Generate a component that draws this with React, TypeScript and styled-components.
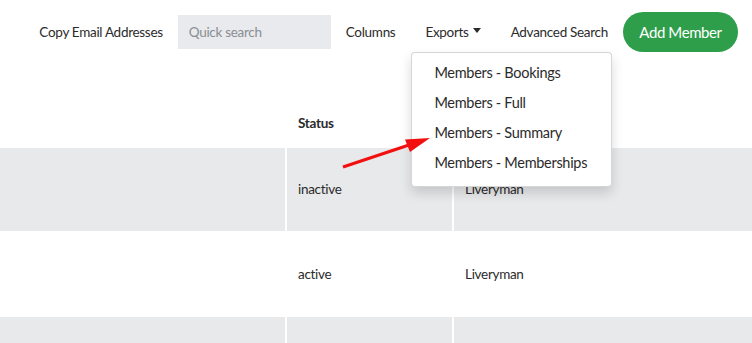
import React from "react";
import styled, { createGlobalStyle } from "styled-components";

const Global = createGlobalStyle`
  html, body { margin: 0; padding: 0; background: #fff; }
  body { font-family: Lato, "Open Sans", sans-serif; color: #2b2b2b; overflow: hidden; }
  * { box-sizing: border-box; }
`;

const Page = styled.div`
  position: relative;
  width: 752px;
  height: 343px;
  overflow: hidden;
`;

const Toolbar = styled.div`
  display: flex;
  align-items: center;
  justify-content: flex-end;
  height: 63px;
  padding: 0 14px 0 0;
`;

const Link = styled.div`
  position: relative;
  display: flex;
  align-items: center;
  height: 40px;
  padding: 0 15px;
  font-size: 13.5px;
  letter-spacing: -0.3px;
  color: #2b2b2b;
  white-space: nowrap;
`;

const Search = styled.div`
  display: flex;
  align-items: center;
  width: 153px;
  height: 34px;
  padding: 0 11px;
  background: #e8eaed;
  color: #8a8d92;
  font-size: 13.5px;
  letter-spacing: -0.3px;
`;

const Caret = styled.span`
  display: inline-block;
  margin-left: 4px;
  margin-top: -2px;
  border-top: 5px solid #2b2b2b;
  border-left: 4.5px solid transparent;
  border-right: 4.5px solid transparent;
`;

const AddButton = styled.div`
  display: flex;
  align-items: center;
  justify-content: center;
  width: 115px;
  height: 40px;
  border-radius: 20px;
  background: #2f9e4a;
  color: #fff;
  font-size: 15px;
  letter-spacing: -0.4px;
`;

const Menu = styled.div`
  position: absolute;
  top: 40px;
  left: 1px;
  width: 201px;
  padding: 5px 0 8px;
  background: #fff;
  border: 1px solid rgba(0, 0, 0, 0.16);
  border-radius: 4px;
  box-shadow: 0 6px 12px rgba(0, 0, 0, 0.15);
  z-index: 5;
`;

const MenuItem = styled.div`
  height: 30px;
  line-height: 30px;
  padding: 0 22px;
  font-size: 14.5px;
  letter-spacing: -0.3px;
  color: #2b2b2b;
`;

const Table = styled.div`
  display: flex;
  flex-direction: column;
  gap: 2px;
`;

const Row = styled.div<{ $h: number; $shade?: boolean; $head?: boolean }>`
  display: grid;
  grid-template-columns: 285px 165px 1fr;
  column-gap: 2px;
  height: ${(p) => p.$h}px;
  background: #fff;
  & > div {
    background: ${(p) => (p.$shade ? "#e8e9eb" : "#fff")};
    display: flex;
    align-items: ${(p) => (p.$head ? "flex-end" : "center")};
    padding: ${(p) => (p.$head ? "0 12px 15px 11px" : "0 12px 1px 11px")};
    font-size: 13.5px;
    letter-spacing: -0.3px;
    font-weight: ${(p) => (p.$head ? 700 : 400)};
  }
`;

const Cell = styled.div``;

const Arrow = styled.svg`
  position: absolute;
  left: 0;
  top: 0;
  pointer-events: none;
  z-index: 6;
`;

const items = [
  "Members - Bookings",
  "Members - Full",
  "Members - Summary",
  "Members - Memberships",
];

export default function App() {
  return (
    <Page>
      <Global />
      <Toolbar>
        <Link>Copy Email Addresses</Link>
        <Search>Quick search</Search>
        <Link>Columns</Link>
        <Link>
          Exports
          <Caret />
          <Menu>
            {items.map((t) => (
              <MenuItem key={t}>{t}</MenuItem>
            ))}
          </Menu>
        </Link>
        <Link>Advanced Search</Link>
        <AddButton>Add Member</AddButton>
      </Toolbar>
      <Table>
        <Row $h={83} $head>
          <Cell />
          <Cell>Status</Cell>
          <Cell />
        </Row>
        <Row $h={83} $shade>
          <Cell />
          <Cell>inactive</Cell>
          <Cell>Liveryman</Cell>
        </Row>
        <Row $h={82}>
          <Cell />
          <Cell>active</Cell>
          <Cell>Liveryman</Cell>
        </Row>
        <Row $h={40} $shade>
          <Cell />
          <Cell />
          <Cell />
        </Row>
      </Table>
      <Arrow width="752" height="343" viewBox="0 0 752 343">
        <line x1="343" y1="167" x2="412" y2="144" stroke="#f20f0f" strokeWidth="3" />
        <polygon points="430,138 405,139.5 410,152" fill="#f20f0f" />
      </Arrow>
    </Page>
  );
}
